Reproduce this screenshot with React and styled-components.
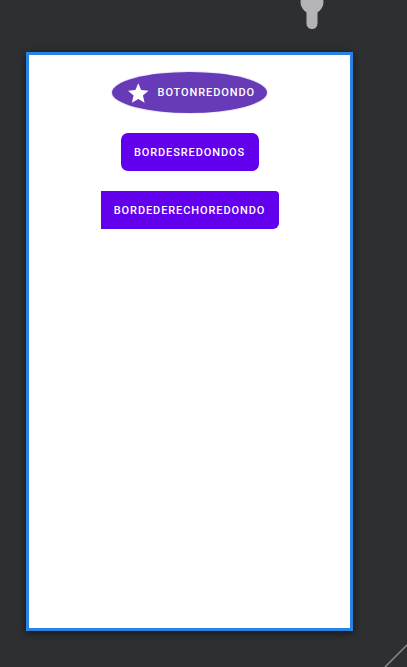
import React from 'react'
import styled, { createGlobalStyle } from 'styled-components'

const GlobalStyle = createGlobalStyle`
  html, body {
    margin: 0;
    padding: 0;
    background: #2e2f31;
  }
  body {
    font-family: Roboto, "Liberation Sans", sans-serif;
  }
`

const Canvas = styled.div`
  position: relative;
  width: 407px;
  height: 667px;
  overflow: hidden;
  background: #2e2f31;
  padding: 52px 0 0 26px;
  box-sizing: border-box;
`

const Device = styled.div`
  width: 327px;
  height: 579px;
  box-sizing: border-box;
  border: 3px solid #2a82e4;
  background: #ffffff;
  box-shadow: 0 2px 8px rgba(0, 0, 0, 0.55);
  display: flex;
  flex-direction: column;
  align-items: center;
  padding-top: 17px;
  gap: 20px;
`

const BaseButton = styled.button`
  border: none;
  margin: 0;
  display: flex;
  align-items: center;
  justify-content: center;
  font-family: Roboto, "Liberation Sans", sans-serif;
  font-weight: 500;
  font-size: 11px;
  letter-spacing: 0.9px;
  color: #ffffff;
  cursor: pointer;
  box-sizing: border-box;
`

const OvalButton = styled(BaseButton)`
  width: 155px;
  height: 41px;
  border-radius: 50%;
  background: #673ab7;
  box-shadow: 0 0 0 1px rgba(200, 180, 240, 0.35);
  padding: 0 12px 0 16px;
  justify-content: flex-start;
  gap: 9px;
`

const RoundButton = styled(BaseButton)`
  width: ${p => p.w}px;
  height: ${p => p.h}px;
  background: #6200ee;
  border-radius: ${p => p.radius};
`

const Star = () => (
  <svg width="21" height="20" viewBox="2 2 20 19" fill="#ffffff">
    <path d="M12 17.27L18.18 21l-1.64-7.03L22 9.24l-7.19-.61L12 2 9.19 8.63 2 9.24l5.46 4.73L5.82 21z" />
  </svg>
)

const Pin = styled.svg`
  position: absolute;
  left: 299px;
  top: 0;
`

const ResizeLine = styled.svg`
  position: absolute;
  right: 0;
  bottom: 0;
`

export default function App() {
  return (
    <>
      <GlobalStyle />
      <Canvas>
        <Pin width="26" height="30" viewBox="0 0 26 30">
          <circle cx="13" cy="2" r="11.5" fill="#b4b4b6" />
          <rect x="7.5" y="4" width="11" height="25" rx="5.5" fill="#b4b4b6" />
        </Pin>
        <Device>
          <OvalButton>
            <Star />
            BOTONREDONDO
          </OvalButton>
          <RoundButton w={138} h={38} radius="7px">BORDESREDONDOS</RoundButton>
          <RoundButton w={178} h={38} radius="0 4px 6px 0">BORDEDERECHOREDONDO</RoundButton>
        </Device>
        <ResizeLine width="24" height="24" viewBox="0 0 24 24">
          <line x1="2" y1="24" x2="24" y2="2" stroke="#8c8c8e" strokeWidth="1.5" />
        </ResizeLine>
      </Canvas>
    </>
  )
}
